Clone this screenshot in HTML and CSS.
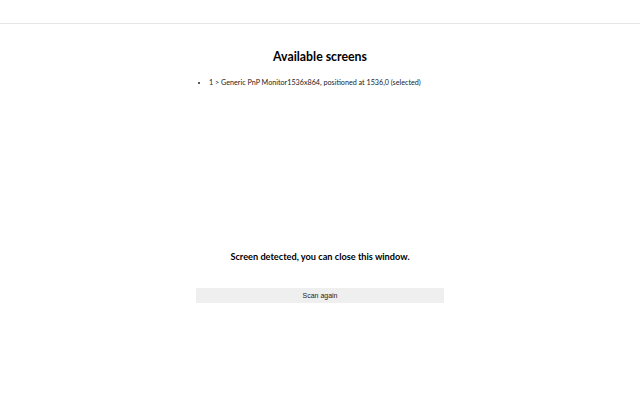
FILE: index.html
```html
<!DOCTYPE html>
<html>
<head>
<meta charset="utf-8">
<link rel="stylesheet" href="styles.css">
</head>
<body>
<header class="topbar"></header>
<main class="content">
  <h1 class="title">Available screens</h1>
  <ul class="screens">
    <li>1 &gt; Generic PnP Monitor1536x864, positioned at 1536,0 (selected)</li>
  </ul>
  <p class="status">Screen detected, you can close this window.</p>
  <button class="scan">Scan again</button>
</main>
</body>
</html>
```
FILE: styles.css
```css
html, body {
  margin: 0;
  padding: 0;
  background: #ffffff;
  font-family: Lato, "Noto Sans", sans-serif;
  color: #000;
}
.topbar {
  height: 23px;
  border-bottom: 1px solid #e6e6e6;
}
.content {
  width: 248px;
  margin: 0 auto;
  display: flex;
  flex-direction: column;
}
.title {
  margin: 25px 0 0;
  font-size: 12.3px;
  line-height: 16px;
  font-weight: 700;
  text-align: center;
}
.screens {
  margin: 13px 0 0;
  padding-left: 13px;
  font-size: 7.2px;
  line-height: 10px;
  color: #222;
  white-space: nowrap;
}
.status {
  margin: 163px 0 0;
  font-size: 9.2px;
  line-height: 12px;
  font-weight: 700;
  text-align: center;
}
.scan {
  margin-top: 25px;
  height: 15px;
  padding: 0;
  border: none;
  background: #efefef;
  font-family: "Liberation Sans", Arial, sans-serif;
  font-size: 7px;
  color: #222;
}
```
